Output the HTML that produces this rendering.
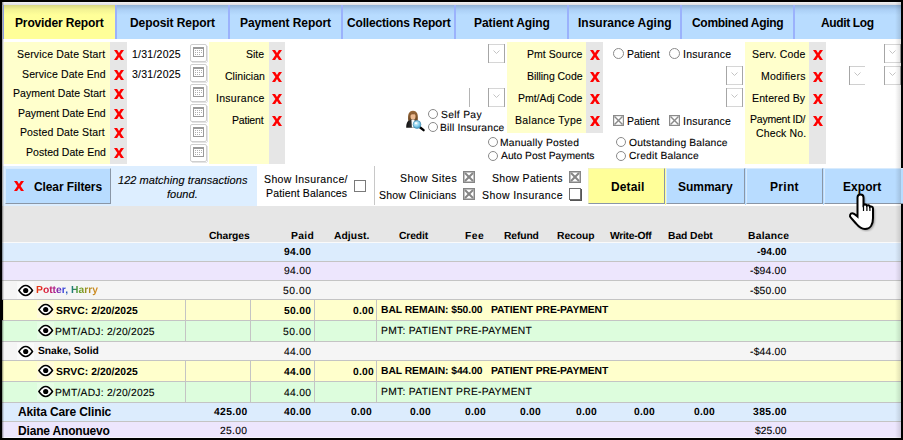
<!DOCTYPE html>
<html><head><meta charset="utf-8">
<style>
*{box-sizing:border-box}
html,body{margin:0;padding:0;width:903px;height:440px;overflow:hidden;background:#000}
body{font-family:"Liberation Sans",sans-serif;color:#000;position:relative}
.a{position:absolute;white-space:nowrap}
svg{display:block}
.r{-webkit-text-stroke:0.1px currentColor}
</style></head><body>
<div class="a" style="left:2px;top:2px;width:899px;height:436px;background:#fff"></div>
<div class="a" style="left:2px;top:2px;width:899px;height:3px;background:linear-gradient(#f2f2f2,#dcdce2)"></div>
<div class="a" style="left:3px;top:5px;width:112px;height:34px;background:linear-gradient(#d6d682 0px,#f4f494 5px,#ffff99 10px);border-left:1px solid #9bb2fc"></div>
<div class="a" style="left:115px;top:5px;width:113px;height:34px;background:linear-gradient(#90b2d6 0px,#acd0f6 5px,#b8dcff 10px);border-left:2px solid #9bb2fc"></div>
<div class="a" style="left:228px;top:5px;width:113px;height:34px;background:linear-gradient(#90b2d6 0px,#acd0f6 5px,#b8dcff 10px);border-left:2px solid #9bb2fc"></div>
<div class="a" style="left:341px;top:5px;width:113px;height:34px;background:linear-gradient(#90b2d6 0px,#acd0f6 5px,#b8dcff 10px);border-left:2px solid #9bb2fc"></div>
<div class="a" style="left:454px;top:5px;width:113px;height:34px;background:linear-gradient(#90b2d6 0px,#acd0f6 5px,#b8dcff 10px);border-left:2px solid #9bb2fc"></div>
<div class="a" style="left:567px;top:5px;width:113px;height:34px;background:linear-gradient(#90b2d6 0px,#acd0f6 5px,#b8dcff 10px);border-left:2px solid #9bb2fc"></div>
<div class="a" style="left:680px;top:5px;width:113px;height:34px;background:linear-gradient(#90b2d6 0px,#acd0f6 5px,#b8dcff 10px);border-left:2px solid #9bb2fc"></div>
<div class="a" style="left:793px;top:5px;width:108px;height:34px;background:linear-gradient(#90b2d6 0px,#acd0f6 5px,#b8dcff 10px);border-left:2px solid #9bb2fc"></div>
<div class="a" style="left:4px;top:42px;width:106px;height:122px;background:#ffffcc"></div>
<div class="a" style="left:110px;top:42px;width:17px;height:122px;background:#e6e6e6"></div>
<div class="a" style="left:114px;top:50px;width:10px;height:10px"><svg width="10" height="10"><polygon points="0,0 3.1,0 5,3 6.9,0 10,0 6.6,5 10,10 6.9,10 5,7 3.1,10 0,10 3.4,5" fill="#f00"/></svg></div>
<div class="a" style="left:114px;top:70px;width:10px;height:10px"><svg width="10" height="10"><polygon points="0,0 3.1,0 5,3 6.9,0 10,0 6.6,5 10,10 6.9,10 5,7 3.1,10 0,10 3.4,5" fill="#f00"/></svg></div>
<div class="a" style="left:114px;top:89px;width:10px;height:10px"><svg width="10" height="10"><polygon points="0,0 3.1,0 5,3 6.9,0 10,0 6.6,5 10,10 6.9,10 5,7 3.1,10 0,10 3.4,5" fill="#f00"/></svg></div>
<div class="a" style="left:114px;top:109px;width:10px;height:10px"><svg width="10" height="10"><polygon points="0,0 3.1,0 5,3 6.9,0 10,0 6.6,5 10,10 6.9,10 5,7 3.1,10 0,10 3.4,5" fill="#f00"/></svg></div>
<div class="a" style="left:114px;top:128px;width:10px;height:10px"><svg width="10" height="10"><polygon points="0,0 3.1,0 5,3 6.9,0 10,0 6.6,5 10,10 6.9,10 5,7 3.1,10 0,10 3.4,5" fill="#f00"/></svg></div>
<div class="a" style="left:114px;top:148px;width:10px;height:10px"><svg width="10" height="10"><polygon points="0,0 3.1,0 5,3 6.9,0 10,0 6.6,5 10,10 6.9,10 5,7 3.1,10 0,10 3.4,5" fill="#f00"/></svg></div>
<div class="a" style="left:190px;top:44px;width:18px;height:19px"><svg width="18" height="19"><rect x="0.5" y="0.5" width="16" height="17" rx="1.5" fill="#fff" stroke="#cfcfcf"/><line x1="17.5" y1="2" x2="17.5" y2="18" stroke="#e4e4e4"/><line x1="2" y1="18.5" x2="17" y2="18.5" stroke="#e4e4e4"/><rect x="3.5" y="3.5" width="10" height="9" fill="#fff" stroke="#9a9a9a"/><rect x="3" y="3" width="11" height="2" fill="#9a9a9a"/><g fill="#b0b0b0"><rect x="5" y="6" width="1" height="1"/><rect x="7" y="6" width="1" height="1"/><rect x="9" y="6" width="1" height="1"/><rect x="11" y="6" width="1" height="1"/><rect x="5" y="8" width="1" height="1"/><rect x="7" y="8" width="1" height="1"/><rect x="9" y="8" width="1" height="1"/><rect x="11" y="8" width="1" height="1"/><rect x="5" y="10" width="1" height="1"/><rect x="7" y="10" width="1" height="1"/><rect x="9" y="10" width="1" height="1"/></g></svg></div>
<div class="a" style="left:190px;top:64px;width:18px;height:19px"><svg width="18" height="19"><rect x="0.5" y="0.5" width="16" height="17" rx="1.5" fill="#fff" stroke="#cfcfcf"/><line x1="17.5" y1="2" x2="17.5" y2="18" stroke="#e4e4e4"/><line x1="2" y1="18.5" x2="17" y2="18.5" stroke="#e4e4e4"/><rect x="3.5" y="3.5" width="10" height="9" fill="#fff" stroke="#9a9a9a"/><rect x="3" y="3" width="11" height="2" fill="#9a9a9a"/><g fill="#b0b0b0"><rect x="5" y="6" width="1" height="1"/><rect x="7" y="6" width="1" height="1"/><rect x="9" y="6" width="1" height="1"/><rect x="11" y="6" width="1" height="1"/><rect x="5" y="8" width="1" height="1"/><rect x="7" y="8" width="1" height="1"/><rect x="9" y="8" width="1" height="1"/><rect x="11" y="8" width="1" height="1"/><rect x="5" y="10" width="1" height="1"/><rect x="7" y="10" width="1" height="1"/><rect x="9" y="10" width="1" height="1"/></g></svg></div>
<div class="a" style="left:190px;top:84px;width:18px;height:19px"><svg width="18" height="19"><rect x="0.5" y="0.5" width="16" height="17" rx="1.5" fill="#fff" stroke="#cfcfcf"/><line x1="17.5" y1="2" x2="17.5" y2="18" stroke="#e4e4e4"/><line x1="2" y1="18.5" x2="17" y2="18.5" stroke="#e4e4e4"/><rect x="3.5" y="3.5" width="10" height="9" fill="#fff" stroke="#9a9a9a"/><rect x="3" y="3" width="11" height="2" fill="#9a9a9a"/><g fill="#b0b0b0"><rect x="5" y="6" width="1" height="1"/><rect x="7" y="6" width="1" height="1"/><rect x="9" y="6" width="1" height="1"/><rect x="11" y="6" width="1" height="1"/><rect x="5" y="8" width="1" height="1"/><rect x="7" y="8" width="1" height="1"/><rect x="9" y="8" width="1" height="1"/><rect x="11" y="8" width="1" height="1"/><rect x="5" y="10" width="1" height="1"/><rect x="7" y="10" width="1" height="1"/><rect x="9" y="10" width="1" height="1"/></g></svg></div>
<div class="a" style="left:190px;top:104px;width:18px;height:19px"><svg width="18" height="19"><rect x="0.5" y="0.5" width="16" height="17" rx="1.5" fill="#fff" stroke="#cfcfcf"/><line x1="17.5" y1="2" x2="17.5" y2="18" stroke="#e4e4e4"/><line x1="2" y1="18.5" x2="17" y2="18.5" stroke="#e4e4e4"/><rect x="3.5" y="3.5" width="10" height="9" fill="#fff" stroke="#9a9a9a"/><rect x="3" y="3" width="11" height="2" fill="#9a9a9a"/><g fill="#b0b0b0"><rect x="5" y="6" width="1" height="1"/><rect x="7" y="6" width="1" height="1"/><rect x="9" y="6" width="1" height="1"/><rect x="11" y="6" width="1" height="1"/><rect x="5" y="8" width="1" height="1"/><rect x="7" y="8" width="1" height="1"/><rect x="9" y="8" width="1" height="1"/><rect x="11" y="8" width="1" height="1"/><rect x="5" y="10" width="1" height="1"/><rect x="7" y="10" width="1" height="1"/><rect x="9" y="10" width="1" height="1"/></g></svg></div>
<div class="a" style="left:190px;top:124px;width:18px;height:19px"><svg width="18" height="19"><rect x="0.5" y="0.5" width="16" height="17" rx="1.5" fill="#fff" stroke="#cfcfcf"/><line x1="17.5" y1="2" x2="17.5" y2="18" stroke="#e4e4e4"/><line x1="2" y1="18.5" x2="17" y2="18.5" stroke="#e4e4e4"/><rect x="3.5" y="3.5" width="10" height="9" fill="#fff" stroke="#9a9a9a"/><rect x="3" y="3" width="11" height="2" fill="#9a9a9a"/><g fill="#b0b0b0"><rect x="5" y="6" width="1" height="1"/><rect x="7" y="6" width="1" height="1"/><rect x="9" y="6" width="1" height="1"/><rect x="11" y="6" width="1" height="1"/><rect x="5" y="8" width="1" height="1"/><rect x="7" y="8" width="1" height="1"/><rect x="9" y="8" width="1" height="1"/><rect x="11" y="8" width="1" height="1"/><rect x="5" y="10" width="1" height="1"/><rect x="7" y="10" width="1" height="1"/><rect x="9" y="10" width="1" height="1"/></g></svg></div>
<div class="a" style="left:190px;top:144px;width:18px;height:19px"><svg width="18" height="19"><rect x="0.5" y="0.5" width="16" height="17" rx="1.5" fill="#fff" stroke="#cfcfcf"/><line x1="17.5" y1="2" x2="17.5" y2="18" stroke="#e4e4e4"/><line x1="2" y1="18.5" x2="17" y2="18.5" stroke="#e4e4e4"/><rect x="3.5" y="3.5" width="10" height="9" fill="#fff" stroke="#9a9a9a"/><rect x="3" y="3" width="11" height="2" fill="#9a9a9a"/><g fill="#b0b0b0"><rect x="5" y="6" width="1" height="1"/><rect x="7" y="6" width="1" height="1"/><rect x="9" y="6" width="1" height="1"/><rect x="11" y="6" width="1" height="1"/><rect x="5" y="8" width="1" height="1"/><rect x="7" y="8" width="1" height="1"/><rect x="9" y="8" width="1" height="1"/><rect x="11" y="8" width="1" height="1"/><rect x="5" y="10" width="1" height="1"/><rect x="7" y="10" width="1" height="1"/><rect x="9" y="10" width="1" height="1"/></g></svg></div>
<div class="a" style="left:209px;top:42px;width:60px;height:122px;background:#ffffcc"></div>
<div class="a" style="left:269px;top:42px;width:16px;height:122px;background:#e6e6e6"></div>
<div class="a" style="left:272px;top:50px;width:10px;height:10px"><svg width="10" height="10"><polygon points="0,0 3.1,0 5,3 6.9,0 10,0 6.6,5 10,10 6.9,10 5,7 3.1,10 0,10 3.4,5" fill="#f00"/></svg></div>
<div class="a" style="left:272px;top:72px;width:10px;height:10px"><svg width="10" height="10"><polygon points="0,0 3.1,0 5,3 6.9,0 10,0 6.6,5 10,10 6.9,10 5,7 3.1,10 0,10 3.4,5" fill="#f00"/></svg></div>
<div class="a" style="left:272px;top:94px;width:10px;height:10px"><svg width="10" height="10"><polygon points="0,0 3.1,0 5,3 6.9,0 10,0 6.6,5 10,10 6.9,10 5,7 3.1,10 0,10 3.4,5" fill="#f00"/></svg></div>
<div class="a" style="left:272px;top:116px;width:10px;height:10px"><svg width="10" height="10"><polygon points="0,0 3.1,0 5,3 6.9,0 10,0 6.6,5 10,10 6.9,10 5,7 3.1,10 0,10 3.4,5" fill="#f00"/></svg></div>
<div class="a" style="left:507px;top:42px;width:79px;height:91px;background:#ffffcc"></div>
<div class="a" style="left:586px;top:42px;width:17px;height:91px;background:#e6e6e6"></div>
<div class="a" style="left:590px;top:50px;width:10px;height:10px"><svg width="10" height="10"><polygon points="0,0 3.1,0 5,3 6.9,0 10,0 6.6,5 10,10 6.9,10 5,7 3.1,10 0,10 3.4,5" fill="#f00"/></svg></div>
<div class="a" style="left:590px;top:72px;width:10px;height:10px"><svg width="10" height="10"><polygon points="0,0 3.1,0 5,3 6.9,0 10,0 6.6,5 10,10 6.9,10 5,7 3.1,10 0,10 3.4,5" fill="#f00"/></svg></div>
<div class="a" style="left:590px;top:94px;width:10px;height:10px"><svg width="10" height="10"><polygon points="0,0 3.1,0 5,3 6.9,0 10,0 6.6,5 10,10 6.9,10 5,7 3.1,10 0,10 3.4,5" fill="#f00"/></svg></div>
<div class="a" style="left:590px;top:116px;width:10px;height:10px"><svg width="10" height="10"><polygon points="0,0 3.1,0 5,3 6.9,0 10,0 6.6,5 10,10 6.9,10 5,7 3.1,10 0,10 3.4,5" fill="#f00"/></svg></div>
<div class="a" style="left:745px;top:42px;width:64px;height:122px;background:#ffffcc"></div>
<div class="a" style="left:809px;top:42px;width:17px;height:122px;background:#e6e6e6"></div>
<div class="a" style="left:813px;top:50px;width:10px;height:10px"><svg width="10" height="10"><polygon points="0,0 3.1,0 5,3 6.9,0 10,0 6.6,5 10,10 6.9,10 5,7 3.1,10 0,10 3.4,5" fill="#f00"/></svg></div>
<div class="a" style="left:813px;top:72px;width:10px;height:10px"><svg width="10" height="10"><polygon points="0,0 3.1,0 5,3 6.9,0 10,0 6.6,5 10,10 6.9,10 5,7 3.1,10 0,10 3.4,5" fill="#f00"/></svg></div>
<div class="a" style="left:813px;top:94px;width:10px;height:10px"><svg width="10" height="10"><polygon points="0,0 3.1,0 5,3 6.9,0 10,0 6.6,5 10,10 6.9,10 5,7 3.1,10 0,10 3.4,5" fill="#f00"/></svg></div>
<div class="a" style="left:813px;top:116px;width:10px;height:10px"><svg width="10" height="10"><polygon points="0,0 3.1,0 5,3 6.9,0 10,0 6.6,5 10,10 6.9,10 5,7 3.1,10 0,10 3.4,5" fill="#f00"/></svg></div>
<div class="a" style="left:488px;top:44px;width:17px;height:19px"><svg width="17" height="19"><rect x="0" y="0" width="17" height="19" fill="#fff"/><line x1="0" y1="0.5" x2="17" y2="0.5" stroke="#d6d6d6"/><line x1="0" y1="18.5" x2="17" y2="18.5" stroke="#d6d6d6"/><line x1="0.5" y1="0" x2="0.5" y2="19" stroke="#a6a6a6"/><line x1="16.5" y1="0" x2="16.5" y2="19" stroke="#a6a6a6"/><polyline points="5.5,6.5 8.5,9.5 11.5,6.5" fill="none" stroke="#c4c4c4" stroke-width="1"/></svg></div>
<div class="a" style="left:488px;top:88px;width:17px;height:19px"><svg width="17" height="19"><rect x="0" y="0" width="17" height="19" fill="#fff"/><line x1="0" y1="0.5" x2="17" y2="0.5" stroke="#d6d6d6"/><line x1="0" y1="18.5" x2="17" y2="18.5" stroke="#d6d6d6"/><line x1="0.5" y1="0" x2="0.5" y2="19" stroke="#a6a6a6"/><line x1="16.5" y1="0" x2="16.5" y2="19" stroke="#a6a6a6"/><polyline points="5.5,6.5 8.5,9.5 11.5,6.5" fill="none" stroke="#c4c4c4" stroke-width="1"/></svg></div>
<div class="a" style="left:726px;top:66px;width:17px;height:19px"><svg width="17" height="19"><rect x="0" y="0" width="17" height="19" fill="#fff"/><line x1="0" y1="0.5" x2="17" y2="0.5" stroke="#d6d6d6"/><line x1="0" y1="18.5" x2="17" y2="18.5" stroke="#d6d6d6"/><line x1="0.5" y1="0" x2="0.5" y2="19" stroke="#a6a6a6"/><line x1="16.5" y1="0" x2="16.5" y2="19" stroke="#a6a6a6"/><polyline points="5.5,6.5 8.5,9.5 11.5,6.5" fill="none" stroke="#c4c4c4" stroke-width="1"/></svg></div>
<div class="a" style="left:726px;top:88px;width:17px;height:19px"><svg width="17" height="19"><rect x="0" y="0" width="17" height="19" fill="#fff"/><line x1="0" y1="0.5" x2="17" y2="0.5" stroke="#d6d6d6"/><line x1="0" y1="18.5" x2="17" y2="18.5" stroke="#d6d6d6"/><line x1="0.5" y1="0" x2="0.5" y2="19" stroke="#a6a6a6"/><line x1="16.5" y1="0" x2="16.5" y2="19" stroke="#a6a6a6"/><polyline points="5.5,6.5 8.5,9.5 11.5,6.5" fill="none" stroke="#c4c4c4" stroke-width="1"/></svg></div>
<div class="a" style="left:884px;top:44px;width:17px;height:19px"><svg width="17" height="19"><rect x="0" y="0" width="17" height="19" fill="#fff"/><line x1="0" y1="0.5" x2="17" y2="0.5" stroke="#d6d6d6"/><line x1="0" y1="18.5" x2="17" y2="18.5" stroke="#d6d6d6"/><line x1="0.5" y1="0" x2="0.5" y2="19" stroke="#a6a6a6"/><line x1="16.5" y1="0" x2="16.5" y2="19" stroke="#a6a6a6"/><polyline points="5.5,6.5 8.5,9.5 11.5,6.5" fill="none" stroke="#c4c4c4" stroke-width="1"/></svg></div>
<div class="a" style="left:884px;top:66px;width:17px;height:19px"><svg width="17" height="19"><rect x="0" y="0" width="17" height="19" fill="#fff"/><line x1="0" y1="0.5" x2="17" y2="0.5" stroke="#d6d6d6"/><line x1="0" y1="18.5" x2="17" y2="18.5" stroke="#d6d6d6"/><line x1="0.5" y1="0" x2="0.5" y2="19" stroke="#a6a6a6"/><line x1="16.5" y1="0" x2="16.5" y2="19" stroke="#a6a6a6"/><polyline points="5.5,6.5 8.5,9.5 11.5,6.5" fill="none" stroke="#c4c4c4" stroke-width="1"/></svg></div>
<div class="a" style="left:849px;top:66px;width:16px;height:19px"><svg width="16" height="19"><line x1="0" y1="0.5" x2="16" y2="0.5" stroke="#d0d0d0"/><line x1="0" y1="18.5" x2="16" y2="18.5" stroke="#d0d0d0"/><line x1="0.5" y1="0" x2="0.5" y2="19" stroke="#a6a6a6"/><polyline points="5.5,6.5 8.5,9.5 11.5,6.5" fill="none" stroke="#c4c4c4" stroke-width="1"/></svg></div>
<div class="a" style="left:469px;top:88px;width:1px;height:19px;background:#b4b4b4"></div>
<div class="a" style="left:402px;top:106px;width:26px;height:26px"><svg width="26" height="26" viewBox="0 0 26 26"><defs><linearGradient id="hg" x1="0" y1="0" x2="0" y2="1"><stop offset="0" stop-color="#9a6a3a"/><stop offset="1" stop-color="#6a4420"/></linearGradient><linearGradient id="jg" x1="0" y1="0" x2="1" y2="0"><stop offset="0" stop-color="#111"/><stop offset="1" stop-color="#555"/></linearGradient><radialGradient id="mg" cx="0.4" cy="0.35" r="0.7"><stop offset="0" stop-color="#e8f8ff"/><stop offset="0.5" stop-color="#8fd4f0"/><stop offset="1" stop-color="#3a98c8"/></radialGradient></defs><path d="M6.3 15 C5.6 9 6.6 4.8 11 4.8 C15.4 4.8 16.4 9 15.7 15 L14 14.2 L8 14.2 Z" fill="url(#hg)"/><ellipse cx="11" cy="10.6" rx="2.5" ry="3.3" fill="#ecba90"/><path d="M8.2 8.8 C8.8 6.8 13.2 6.8 13.8 8.8 C13 8 9 8 8.2 8.8Z" fill="#7a4a20"/><path d="M4.2 21.8 C4.2 16.5 5.8 14.2 9 13.8 L13 13.8 C15.2 14.2 16.2 15.5 16.2 17.5 L16.2 21.8 Z" fill="url(#jg)"/><path d="M9.4 13.8 L12.6 13.8 L12.2 21.5 L9.9 21.5 Z" fill="#fff"/><line x1="17.6" y1="21" x2="21.6" y2="24.2" stroke="#000" stroke-width="2.3" stroke-linecap="round"/><circle cx="15" cy="18.5" r="3.9" fill="url(#mg)" stroke="#4a8fb2" stroke-width="0.7"/><ellipse cx="14" cy="17.2" rx="1.2" ry="0.9" fill="#fff" opacity="0.9"/></svg></div>
<div class="a" style="left:428px;top:109px;width:10px;height:10px;border:1px solid #8a8a8a;border-radius:50%;background:#fff"></div>
<div class="a" style="left:428px;top:122px;width:10px;height:10px;border:1px solid #8a8a8a;border-radius:50%;background:#fff"></div>
<div class="a" style="left:488px;top:137px;width:10px;height:10px;border:1px solid #8a8a8a;border-radius:50%;background:#fff"></div>
<div class="a" style="left:488px;top:151px;width:10px;height:10px;border:1px solid #8a8a8a;border-radius:50%;background:#fff"></div>
<div class="a" style="left:613px;top:48px;width:11px;height:11px;border:1px solid #8a8a8a;border-radius:50%;background:#fff"></div>
<div class="a" style="left:669px;top:48px;width:11px;height:11px;border:1px solid #8a8a8a;border-radius:50%;background:#fff"></div>
<div class="a" style="left:613px;top:115px;width:11px;height:11px"><svg width="11" height="11"><rect x="0.6" y="0.6" width="9.8" height="9.8" fill="#fff" stroke="#8a8a8a" stroke-width="1.2"/><line x1="1.5" y1="1.5" x2="9.5" y2="9.5" stroke="#8a8a8a" stroke-width="1.5"/><line x1="9.5" y1="1.5" x2="1.5" y2="9.5" stroke="#8a8a8a" stroke-width="1.5"/></svg></div>
<div class="a" style="left:669px;top:115px;width:11px;height:11px"><svg width="11" height="11"><rect x="0.6" y="0.6" width="9.8" height="9.8" fill="#fff" stroke="#8a8a8a" stroke-width="1.2"/><line x1="1.5" y1="1.5" x2="9.5" y2="9.5" stroke="#8a8a8a" stroke-width="1.5"/><line x1="9.5" y1="1.5" x2="1.5" y2="9.5" stroke="#8a8a8a" stroke-width="1.5"/></svg></div>
<div class="a" style="left:616px;top:137px;width:10px;height:10px;border:1px solid #8a8a8a;border-radius:50%;background:#fff"></div>
<div class="a" style="left:616px;top:151px;width:10px;height:10px;border:1px solid #8a8a8a;border-radius:50%;background:#fff"></div>
<div class="a" style="left:3px;top:166px;width:254px;height:40px;background:#ddeeff"></div>
<div class="a" style="left:5px;top:168px;width:106px;height:36px;background:#b8dcff;border:1px solid;border-color:#d8ebfd #8a96a6 #8a96a6 #d8ebfd"></div>
<div class="a" style="left:14px;top:181px;width:10px;height:10px"><svg width="10" height="10"><polygon points="0,0 3.1,0 5,3 6.9,0 10,0 6.6,5 10,10 6.9,10 5,7 3.1,10 0,10 3.4,5" fill="#f00"/></svg></div>
<div class="a" style="left:354px;top:180px;width:12px;height:12px;border:1px solid #7a7a7a;background:#fff"></div>
<div class="a" style="left:374px;top:166px;width:1px;height:39px;background:#c8c8c8"></div>
<div class="a" style="left:463px;top:171px;width:12px;height:12px"><svg width="12" height="12"><rect x="0.75" y="0.75" width="10.5" height="10.5" fill="#fff" stroke="#858585" stroke-width="1.5"/><line x1="2" y1="2" x2="10" y2="10" stroke="#858585" stroke-width="1.9"/><line x1="10" y1="2" x2="2" y2="10" stroke="#858585" stroke-width="1.9"/></svg></div>
<div class="a" style="left:463px;top:188px;width:12px;height:12px"><svg width="12" height="12"><rect x="0.75" y="0.75" width="10.5" height="10.5" fill="#fff" stroke="#858585" stroke-width="1.5"/><line x1="2" y1="2" x2="10" y2="10" stroke="#858585" stroke-width="1.9"/><line x1="10" y1="2" x2="2" y2="10" stroke="#858585" stroke-width="1.9"/></svg></div>
<div class="a" style="left:569px;top:171px;width:12px;height:12px"><svg width="12" height="12"><rect x="0.75" y="0.75" width="10.5" height="10.5" fill="#fff" stroke="#858585" stroke-width="1.5"/><line x1="2" y1="2" x2="10" y2="10" stroke="#858585" stroke-width="1.9"/><line x1="10" y1="2" x2="2" y2="10" stroke="#858585" stroke-width="1.9"/></svg></div>
<div class="a" style="left:569px;top:188px;width:13px;height:13px"><svg width="13" height="13"><rect x="1" y="1" width="12" height="12" fill="#555"/><rect x="0.5" y="0.5" width="11" height="11" fill="#fff" stroke="#6e6e6e"/></svg></div>
<div class="a" style="left:588px;top:168px;width:77px;height:36px;background:#ffff99;border:1px solid;border-color:#f4f4c0 #8a96a6 #8a96a6 #f4f4c0"></div>
<div class="a" style="left:665px;top:168px;width:1px;height:37px;background:#ffff99"></div>
<div class="a" style="left:666px;top:168px;width:79px;height:36px;background:#b8dcff;border:1px solid;border-color:#d8ebfd #8a96a6 #8a96a6 #d8ebfd"></div>
<div class="a" style="left:745px;top:168px;width:1px;height:37px;background:#b8dcff"></div>
<div class="a" style="left:746px;top:168px;width:77px;height:36px;background:#b8dcff;border:1px solid;border-color:#d8ebfd #8a96a6 #8a96a6 #d8ebfd"></div>
<div class="a" style="left:823px;top:168px;width:1px;height:37px;background:#b8dcff"></div>
<div class="a" style="left:824px;top:168px;width:80px;height:36px;background:#b8dcff;border:1px solid;border-color:#d8ebfd #8a96a6 #8a96a6 #d8ebfd"></div>
<div class="a" style="left:904px;top:168px;width:1px;height:37px;background:#b8dcff"></div>
<div class="a" style="left:2px;top:206px;width:899px;height:36px;background:#e6e6e6"></div>
<div class="a" style="left:2px;top:242px;width:899px;height:1px;background:#fafafa"></div>
<div class="a" style="left:2px;top:243px;width:899px;height:18px;background:#dcecfd"></div>
<div class="a" style="left:2px;top:261px;width:899px;height:1px;background:#c4c4c4"></div>
<div class="a" style="left:2px;top:262px;width:899px;height:18px;background:#ede6fd"></div>
<div class="a" style="left:2px;top:280px;width:899px;height:1px;background:#c4c4c4"></div>
<div class="a" style="left:2px;top:281px;width:899px;height:18px;background:#f5f5f5"></div>
<div class="a" style="left:2px;top:299px;width:899px;height:1px;background:#c4c4c4"></div>
<div class="a" style="left:2px;top:300px;width:899px;height:20px;background:#ffffcc"></div>
<div class="a" style="left:2px;top:320px;width:899px;height:1px;background:#c4c4c4"></div>
<div class="a" style="left:2px;top:321px;width:899px;height:20px;background:#ddfddd"></div>
<div class="a" style="left:2px;top:341px;width:899px;height:1px;background:#c4c4c4"></div>
<div class="a" style="left:2px;top:342px;width:899px;height:18px;background:#f5f5f5"></div>
<div class="a" style="left:2px;top:360px;width:899px;height:1px;background:#c4c4c4"></div>
<div class="a" style="left:2px;top:361px;width:899px;height:20px;background:#ffffcc"></div>
<div class="a" style="left:2px;top:381px;width:899px;height:1px;background:#c4c4c4"></div>
<div class="a" style="left:2px;top:382px;width:899px;height:20px;background:#ddfddd"></div>
<div class="a" style="left:2px;top:402px;width:899px;height:1px;background:#c4c4c4"></div>
<div class="a" style="left:2px;top:403px;width:899px;height:18px;background:#dcecfd"></div>
<div class="a" style="left:2px;top:421px;width:899px;height:1px;background:#c4c4c4"></div>
<div class="a" style="left:2px;top:422px;width:899px;height:15px;background:#ede6fd"></div>
<div class="a" style="left:2px;top:437px;width:899px;height:1px;background:#f6f2fc"></div>
<div class="a" style="left:2px;top:300px;width:1px;height:20px;background:#000"></div>
<div class="a" style="left:185px;top:300px;width:1px;height:20px;background:#c4c4c4"></div>
<div class="a" style="left:250px;top:300px;width:1px;height:20px;background:#c4c4c4"></div>
<div class="a" style="left:314px;top:300px;width:1px;height:20px;background:#c4c4c4"></div>
<div class="a" style="left:376px;top:300px;width:1px;height:20px;background:#c4c4c4"></div>
<div class="a" style="left:185px;top:321px;width:1px;height:20px;background:#c4c4c4"></div>
<div class="a" style="left:250px;top:321px;width:1px;height:20px;background:#c4c4c4"></div>
<div class="a" style="left:314px;top:321px;width:1px;height:20px;background:#c4c4c4"></div>
<div class="a" style="left:376px;top:321px;width:1px;height:20px;background:#c4c4c4"></div>
<div class="a" style="left:185px;top:361px;width:1px;height:20px;background:#c4c4c4"></div>
<div class="a" style="left:250px;top:361px;width:1px;height:20px;background:#c4c4c4"></div>
<div class="a" style="left:314px;top:361px;width:1px;height:20px;background:#c4c4c4"></div>
<div class="a" style="left:376px;top:361px;width:1px;height:20px;background:#c4c4c4"></div>
<div class="a" style="left:185px;top:382px;width:1px;height:20px;background:#c4c4c4"></div>
<div class="a" style="left:250px;top:382px;width:1px;height:20px;background:#c4c4c4"></div>
<div class="a" style="left:314px;top:382px;width:1px;height:20px;background:#c4c4c4"></div>
<div class="a" style="left:376px;top:382px;width:1px;height:20px;background:#c4c4c4"></div>
<div class="a" style="left:17px;top:282px;width:17px;height:17px;background:#fafafa"></div>
<div class="a" style="left:18px;top:284px;width:16px;height:13px"><svg width="16" height="13" viewBox="0 0 16 13"><path d="M0.9 6.5 Q7.7 -3.4 14.5 6.5 Q7.7 16.4 0.9 6.5 Z" fill="#fff" stroke="#000" stroke-width="1.6" stroke-linejoin="round"/><circle cx="7.7" cy="6.5" r="2.6" fill="#000"/></svg></div>
<div class="a" style="left:37px;top:301px;width:17px;height:17px;background:#fffbdc"></div>
<div class="a" style="left:38px;top:303px;width:16px;height:13px"><svg width="16" height="13" viewBox="0 0 16 13"><path d="M0.9 6.5 Q7.7 -3.4 14.5 6.5 Q7.7 16.4 0.9 6.5 Z" fill="#fff" stroke="#000" stroke-width="1.6" stroke-linejoin="round"/><circle cx="7.7" cy="6.5" r="2.6" fill="#000"/></svg></div>
<div class="a" style="left:37px;top:322px;width:17px;height:17px;background:#e6fde6"></div>
<div class="a" style="left:38px;top:324px;width:16px;height:13px"><svg width="16" height="13" viewBox="0 0 16 13"><path d="M0.9 6.5 Q7.7 -3.4 14.5 6.5 Q7.7 16.4 0.9 6.5 Z" fill="#fff" stroke="#000" stroke-width="1.6" stroke-linejoin="round"/><circle cx="7.7" cy="6.5" r="2.6" fill="#000"/></svg></div>
<div class="a" style="left:37px;top:362px;width:17px;height:17px;background:#fffbdc"></div>
<div class="a" style="left:38px;top:364px;width:16px;height:13px"><svg width="16" height="13" viewBox="0 0 16 13"><path d="M0.9 6.5 Q7.7 -3.4 14.5 6.5 Q7.7 16.4 0.9 6.5 Z" fill="#fff" stroke="#000" stroke-width="1.6" stroke-linejoin="round"/><circle cx="7.7" cy="6.5" r="2.6" fill="#000"/></svg></div>
<div class="a" style="left:37px;top:383px;width:17px;height:17px;background:#e6fde6"></div>
<div class="a" style="left:38px;top:385px;width:16px;height:13px"><svg width="16" height="13" viewBox="0 0 16 13"><path d="M0.9 6.5 Q7.7 -3.4 14.5 6.5 Q7.7 16.4 0.9 6.5 Z" fill="#fff" stroke="#000" stroke-width="1.6" stroke-linejoin="round"/><circle cx="7.7" cy="6.5" r="2.6" fill="#000"/></svg></div>
<div class="a" style="left:17px;top:343px;width:17px;height:17px;background:#fafafa"></div>
<div class="a" style="left:18px;top:345px;width:16px;height:13px"><svg width="16" height="13" viewBox="0 0 16 13"><path d="M0.9 6.5 Q7.7 -3.4 14.5 6.5 Q7.7 16.4 0.9 6.5 Z" fill="#fff" stroke="#000" stroke-width="1.6" stroke-linejoin="round"/><circle cx="7.7" cy="6.5" r="2.6" fill="#000"/></svg></div>
<div class="a" style="left:15px;top:13px;font-size:12px;line-height:20px;font-weight:bold;letter-spacing:-0.143px;">Provider Report</div>
<div class="a" style="left:130px;top:13px;font-size:12px;line-height:20px;font-weight:bold;letter-spacing:-0.077px;">Deposit Report</div>
<div class="a" style="left:240px;top:13px;font-size:12px;line-height:20px;font-weight:bold;letter-spacing:-0.077px;">Payment Report</div>
<div class="a" style="left:347px;top:13px;font-size:12px;line-height:20px;font-weight:bold;letter-spacing:-0.176px;">Collections Report</div>
<div class="a" style="left:474px;top:13px;font-size:12px;line-height:20px;font-weight:bold;letter-spacing:-0.083px;">Patient Aging</div>
<div class="a" style="left:578px;top:13px;font-size:12px;line-height:20px;font-weight:bold;">Insurance Aging</div>
<div class="a" style="left:692px;top:13px;font-size:12px;line-height:20px;font-weight:bold;letter-spacing:-0.308px;">Combined Aging</div>
<div class="a" style="left:821px;top:13px;font-size:12px;line-height:20px;font-weight:bold;letter-spacing:-0.375px;">Audit Log</div>
<div class="a r" style="left:17px;top:44px;font-size:10.5px;line-height:20px;letter-spacing:0.171px;">Service Date Start</div>
<div class="a r" style="left:22px;top:64px;font-size:10.5px;line-height:20px;letter-spacing:0.127px;">Service Date End</div>
<div class="a r" style="left:13px;top:83px;font-size:10.5px;line-height:20px;letter-spacing:0.053px;">Payment Date Start</div>
<div class="a r" style="left:18px;top:103px;font-size:10.5px;line-height:20px;letter-spacing:-0.040px;">Payment Date End</div>
<div class="a r" style="left:20px;top:122px;font-size:10.5px;line-height:20px;letter-spacing:0.112px;">Posted Date Start</div>
<div class="a r" style="left:26px;top:142px;font-size:10.5px;line-height:20px;letter-spacing:0.036px;">Posted Date End</div>
<div class="a r" style="left:132px;top:44px;font-size:10.5px;line-height:20px;letter-spacing:0.250px;">1/31/2025</div>
<div class="a r" style="left:132px;top:64px;font-size:10.5px;line-height:20px;letter-spacing:0.250px;">3/31/2025</div>
<div class="a r" style="left:246px;top:44px;font-size:10.5px;line-height:20px;">Site</div>
<div class="a r" style="left:225px;top:66px;font-size:10.5px;line-height:20px;letter-spacing:0.025px;">Clinician</div>
<div class="a r" style="left:216px;top:88px;font-size:10.5px;line-height:20px;letter-spacing:0.287px;">Insurance</div>
<div class="a r" style="left:232px;top:110px;font-size:10.5px;line-height:20px;letter-spacing:-0.183px;">Patient</div>
<div class="a r" style="left:527px;top:44px;font-size:10.5px;line-height:20px;letter-spacing:0.056px;">Pmt Source</div>
<div class="a r" style="left:527px;top:66px;font-size:10.5px;line-height:20px;letter-spacing:-0.045px;">Billing Code</div>
<div class="a r" style="left:518px;top:88px;font-size:10.5px;line-height:20px;letter-spacing:-0.036px;">Pmt/Adj Code</div>
<div class="a r" style="left:515px;top:110px;font-size:10.5px;line-height:20px;letter-spacing:0.318px;">Balance Type</div>
<div class="a r" style="left:752px;top:44px;font-size:10.5px;line-height:20px;letter-spacing:0.167px;">Serv. Code</div>
<div class="a r" style="left:761px;top:66px;font-size:10.5px;line-height:20px;letter-spacing:0.225px;">Modifiers</div>
<div class="a r" style="left:752px;top:88px;font-size:10.5px;line-height:20px;letter-spacing:0.122px;">Entered By</div>
<div class="a r" style="left:750px;top:109px;font-size:10.5px;line-height:20px;letter-spacing:-0.230px;">Payment ID/</div>
<div class="a r" style="left:756px;top:123px;font-size:10.5px;line-height:20px;letter-spacing:0.150px;">Check No.</div>
<div class="a r" style="left:441px;top:106px;font-size:10.3px;line-height:20px;letter-spacing:0.314px;text-rendering:geometricPrecision;">Self Pay</div>
<div class="a r" style="left:440px;top:119px;font-size:10.3px;line-height:20px;letter-spacing:0.185px;text-rendering:geometricPrecision;">Bill Insurance</div>
<div class="a r" style="left:500px;top:134px;font-size:10.3px;line-height:20px;letter-spacing:0.207px;text-rendering:geometricPrecision;">Manually Posted</div>
<div class="a r" style="left:501px;top:147px;font-size:10.3px;line-height:20px;letter-spacing:0.012px;text-rendering:geometricPrecision;">Auto Post Payments</div>
<div class="a r" style="left:627px;top:44px;font-size:10.5px;line-height:20px;letter-spacing:-0.017px;">Patient</div>
<div class="a r" style="left:683px;top:44px;font-size:10.5px;line-height:20px;letter-spacing:0.250px;">Insurance</div>
<div class="a r" style="left:627px;top:111px;font-size:10.5px;line-height:20px;letter-spacing:-0.050px;">Patient</div>
<div class="a r" style="left:683px;top:111px;font-size:10.5px;line-height:20px;letter-spacing:0.225px;">Insurance</div>
<div class="a r" style="left:629px;top:134px;font-size:10.3px;line-height:20px;letter-spacing:0.161px;text-rendering:geometricPrecision;">Outstanding Balance</div>
<div class="a r" style="left:629px;top:147px;font-size:10.3px;line-height:20px;letter-spacing:0.162px;text-rendering:geometricPrecision;">Credit Balance</div>
<div class="a" style="left:34px;top:177px;font-size:12px;line-height:20px;font-weight:bold;letter-spacing:-0.108px;">Clear Filters</div>
<div class="a r" style="left:118px;top:170px;font-size:11px;line-height:20px;font-style:italic;letter-spacing:0.042px;">122 matching transactions</div>
<div class="a r" style="left:167px;top:184px;font-size:11px;line-height:20px;font-style:italic;letter-spacing:0.020px;">found.</div>
<div class="a r" style="left:264px;top:169px;font-size:10.5px;line-height:20px;letter-spacing:0.379px;">Show Insurance/</div>
<div class="a r" style="left:266px;top:183px;font-size:10.5px;line-height:20px;letter-spacing:0.153px;">Patient Balances</div>
<div class="a r" style="left:400px;top:168px;font-size:10.5px;line-height:20px;letter-spacing:0.456px;">Show Sites</div>
<div class="a r" style="left:379px;top:185px;font-size:10.5px;line-height:20px;letter-spacing:0.229px;">Show Clinicians</div>
<div class="a r" style="left:492px;top:168px;font-size:10.5px;line-height:20px;letter-spacing:0.283px;">Show Patients</div>
<div class="a r" style="left:482px;top:185px;font-size:10.5px;line-height:20px;letter-spacing:0.400px;">Show Insurance</div>
<div class="a" style="left:611px;top:177px;font-size:12px;line-height:20px;font-weight:bold;letter-spacing:0.120px;">Detail</div>
<div class="a" style="left:678px;top:177px;font-size:12px;line-height:20px;font-weight:bold;letter-spacing:-0.017px;">Summary</div>
<div class="a" style="left:770px;top:177px;font-size:12px;line-height:20px;font-weight:bold;letter-spacing:0.300px;">Print</div>
<div class="a" style="left:843px;top:177px;font-size:12px;line-height:20px;font-weight:bold;letter-spacing:0.040px;">Export</div>
<div class="a" style="left:209px;top:227px;font-size:10.3px;line-height:20px;font-weight:bold;letter-spacing:-0.100px;text-rendering:geometricPrecision;">Charges</div>
<div class="a" style="left:291px;top:227px;font-size:10.3px;line-height:20px;font-weight:bold;letter-spacing:0.333px;text-rendering:geometricPrecision;">Paid</div>
<div class="a" style="left:334px;top:227px;font-size:10.3px;line-height:20px;font-weight:bold;letter-spacing:0.067px;text-rendering:geometricPrecision;">Adjust.</div>
<div class="a" style="left:399px;top:227px;font-size:10.3px;line-height:20px;font-weight:bold;letter-spacing:-0.120px;text-rendering:geometricPrecision;">Credit</div>
<div class="a" style="left:465px;top:227px;font-size:10.3px;line-height:20px;font-weight:bold;letter-spacing:0.500px;text-rendering:geometricPrecision;">Fee</div>
<div class="a" style="left:504px;top:227px;font-size:10.3px;line-height:20px;font-weight:bold;letter-spacing:-0.120px;text-rendering:geometricPrecision;">Refund</div>
<div class="a" style="left:557px;top:227px;font-size:10.3px;line-height:20px;font-weight:bold;letter-spacing:-0.040px;text-rendering:geometricPrecision;">Recoup</div>
<div class="a" style="left:610px;top:227px;font-size:10.3px;line-height:20px;font-weight:bold;letter-spacing:-0.263px;text-rendering:geometricPrecision;">Write-Off</div>
<div class="a" style="left:668px;top:227px;font-size:10.3px;line-height:20px;font-weight:bold;letter-spacing:-0.057px;text-rendering:geometricPrecision;">Bad Debt</div>
<div class="a" style="left:748px;top:227px;font-size:10.3px;line-height:20px;font-weight:bold;letter-spacing:0.250px;text-rendering:geometricPrecision;">Balance</div>
<div class="a" style="left:284px;top:243px;font-size:10.3px;line-height:20px;font-weight:bold;letter-spacing:0.300px;text-rendering:geometricPrecision;">94.00</div>
<div class="a" style="left:757px;top:243px;font-size:10.3px;line-height:20px;font-weight:bold;letter-spacing:0.060px;text-rendering:geometricPrecision;">-94.00</div>
<div class="a r" style="left:284px;top:262px;font-size:10.3px;line-height:20px;letter-spacing:0.300px;text-rendering:geometricPrecision;">94.00</div>
<div class="a r" style="left:750px;top:262px;font-size:10.3px;line-height:20px;letter-spacing:0.200px;text-rendering:geometricPrecision;">-$94.00</div>
<div class="a" style="left:36px;top:281px;font-size:10.3px;line-height:20px;font-weight:bold;letter-spacing:0.008px;text-rendering:geometricPrecision;"><span style="background:linear-gradient(90deg,#e84010 0%,#e02030 14%,#a81890 30%,#3040e0 45%,#1a7a80 57%,#60a020 70%,#b08a20 85%,#d88a20 100%);-webkit-background-clip:text;background-clip:text;color:transparent">Potter, Harry</span></div>
<div class="a r" style="left:283px;top:282px;font-size:10.3px;line-height:20px;letter-spacing:0.550px;text-rendering:geometricPrecision;">50.00</div>
<div class="a r" style="left:750px;top:282px;font-size:10.3px;line-height:20px;letter-spacing:0.200px;text-rendering:geometricPrecision;">-$50.00</div>
<div class="a" style="left:56px;top:302px;font-size:10.3px;line-height:20px;font-weight:bold;letter-spacing:0.086px;text-rendering:geometricPrecision;">SRVC: 2/20/2025</div>
<div class="a" style="left:284px;top:302px;font-size:10.3px;line-height:20px;font-weight:bold;letter-spacing:0.300px;text-rendering:geometricPrecision;">50.00</div>
<div class="a" style="left:353px;top:302px;font-size:10.3px;line-height:20px;font-weight:bold;letter-spacing:0.200px;text-rendering:geometricPrecision;">0.00</div>
<div class="a" style="left:381px;top:301px;font-size:10.3px;line-height:20px;font-weight:bold;letter-spacing:-0.041px;text-rendering:geometricPrecision;">BAL REMAIN: $50.00</div>
<div class="a" style="left:491px;top:301px;font-size:10.3px;line-height:20px;font-weight:bold;letter-spacing:-0.078px;text-rendering:geometricPrecision;">PATIENT PRE-PAYMENT</div>
<div class="a r" style="left:55px;top:323px;font-size:10.3px;line-height:20px;letter-spacing:0.235px;text-rendering:geometricPrecision;">PMT/ADJ: 2/20/2025</div>
<div class="a r" style="left:283px;top:323px;font-size:10.3px;line-height:20px;letter-spacing:0.550px;text-rendering:geometricPrecision;">50.00</div>
<div class="a r" style="left:381px;top:322px;font-size:10.3px;line-height:20px;letter-spacing:0.309px;text-rendering:geometricPrecision;">PMT: PATIENT PRE-PAYMENT</div>
<div class="a" style="left:56px;top:363px;font-size:10.3px;line-height:20px;font-weight:bold;letter-spacing:0.086px;text-rendering:geometricPrecision;">SRVC: 2/20/2025</div>
<div class="a" style="left:284px;top:363px;font-size:10.3px;line-height:20px;font-weight:bold;letter-spacing:0.300px;text-rendering:geometricPrecision;">44.00</div>
<div class="a" style="left:353px;top:363px;font-size:10.3px;line-height:20px;font-weight:bold;letter-spacing:0.200px;text-rendering:geometricPrecision;">0.00</div>
<div class="a" style="left:381px;top:362px;font-size:10.3px;line-height:20px;font-weight:bold;letter-spacing:-0.041px;text-rendering:geometricPrecision;">BAL REMAIN: $44.00</div>
<div class="a" style="left:491px;top:362px;font-size:10.3px;line-height:20px;font-weight:bold;letter-spacing:-0.078px;text-rendering:geometricPrecision;">PATIENT PRE-PAYMENT</div>
<div class="a r" style="left:55px;top:384px;font-size:10.3px;line-height:20px;letter-spacing:0.235px;text-rendering:geometricPrecision;">PMT/ADJ: 2/20/2025</div>
<div class="a r" style="left:284px;top:384px;font-size:10.3px;line-height:20px;letter-spacing:0.300px;text-rendering:geometricPrecision;">44.00</div>
<div class="a r" style="left:381px;top:383px;font-size:10.3px;line-height:20px;letter-spacing:0.309px;text-rendering:geometricPrecision;">PMT: PATIENT PRE-PAYMENT</div>
<div class="a" style="left:38px;top:342px;font-size:10.3px;line-height:20px;font-weight:bold;letter-spacing:-0.045px;text-rendering:geometricPrecision;">Snake, Solid</div>
<div class="a r" style="left:284px;top:343px;font-size:10.3px;line-height:20px;letter-spacing:0.300px;text-rendering:geometricPrecision;">44.00</div>
<div class="a r" style="left:750px;top:343px;font-size:10.3px;line-height:20px;letter-spacing:0.200px;text-rendering:geometricPrecision;">-$44.00</div>
<div class="a" style="left:18px;top:402px;font-size:12px;line-height:20px;font-weight:bold;letter-spacing:-0.131px;">Akita Care Clinic</div>
<div class="a" style="left:214px;top:403px;font-size:10.3px;line-height:20px;font-weight:bold;letter-spacing:0.360px;text-rendering:geometricPrecision;">425.00</div>
<div class="a" style="left:284px;top:403px;font-size:10.3px;line-height:20px;font-weight:bold;letter-spacing:0.300px;text-rendering:geometricPrecision;">40.00</div>
<div class="a" style="left:351px;top:403px;font-size:10.3px;line-height:20px;font-weight:bold;letter-spacing:0.200px;text-rendering:geometricPrecision;">0.00</div>
<div class="a" style="left:410px;top:403px;font-size:10.3px;line-height:20px;font-weight:bold;letter-spacing:0.200px;text-rendering:geometricPrecision;">0.00</div>
<div class="a" style="left:465px;top:403px;font-size:10.3px;line-height:20px;font-weight:bold;letter-spacing:0.200px;text-rendering:geometricPrecision;">0.00</div>
<div class="a" style="left:520px;top:403px;font-size:10.3px;line-height:20px;font-weight:bold;letter-spacing:0.200px;text-rendering:geometricPrecision;">0.00</div>
<div class="a" style="left:576px;top:403px;font-size:10.3px;line-height:20px;font-weight:bold;letter-spacing:0.200px;text-rendering:geometricPrecision;">0.00</div>
<div class="a" style="left:634px;top:403px;font-size:10.3px;line-height:20px;font-weight:bold;letter-spacing:0.200px;text-rendering:geometricPrecision;">0.00</div>
<div class="a" style="left:694px;top:403px;font-size:10.3px;line-height:20px;font-weight:bold;letter-spacing:0.200px;text-rendering:geometricPrecision;">0.00</div>
<div class="a" style="left:753px;top:403px;font-size:10.3px;line-height:20px;font-weight:bold;letter-spacing:0.420px;text-rendering:geometricPrecision;">385.00</div>
<div class="a" style="left:18px;top:421px;font-size:12px;line-height:20px;font-weight:bold;letter-spacing:-0.177px;">Diane Anonuevo</div>
<div class="a r" style="left:220px;top:422px;font-size:10.3px;line-height:20px;letter-spacing:0.300px;text-rendering:geometricPrecision;">25.00</div>
<div class="a r" style="left:755px;top:422px;font-size:10.3px;line-height:20px;text-rendering:geometricPrecision;">$25.00</div>
<div class="a" style="left:2px;top:2px;width:2px;height:436px;background:linear-gradient(90deg,rgba(0,0,0,0.45),rgba(0,0,0,0))"></div><div class="a" style="left:895px;top:2px;width:6px;height:436px;background:linear-gradient(90deg,rgba(0,0,0,0),rgba(0,0,0,0.13))"></div><div class="a" style="left:848px;top:192px;width:32px;height:40px"><svg width="32" height="40" viewBox="0 0 32 40"><defs><filter id="sh" x="-30%" y="-30%" width="170%" height="170%"><feGaussianBlur stdDeviation="1.3"/></filter></defs><path d="M12.5 2.5 C14.2 2.5 15.5 3.6 15.5 5.5 L15.5 13 C16.4 12.1 18.4 12.2 18.9 13.6 C19.8 12.8 21.6 13.1 21.9 14.7 C22.8 14 25 14.6 25 16.5 L25 26 C25 32 22.5 37 17 37 C12.5 37 10.5 34.5 8 31.5 L2.6 25.3 C1.3 23.8 2.2 21.3 4.2 21.3 C5.5 21.3 7.2 22.5 9.5 24.5 L9.5 5.5 C9.5 3.6 10.8 2.5 12.5 2.5 Z" transform="translate(1.5,1.5)" fill="#000" opacity="0.4" filter="url(#sh)"/><path d="M12.5 2.5 C14.2 2.5 15.5 3.6 15.5 5.5 L15.5 13 C16.4 12.1 18.4 12.2 18.9 13.6 C19.8 12.8 21.6 13.1 21.9 14.7 C22.8 14 25 14.6 25 16.5 L25 26 C25 32 22.5 37 17 37 C12.5 37 10.5 34.5 8 31.5 L2.6 25.3 C1.3 23.8 2.2 21.3 4.2 21.3 C5.5 21.3 7.2 22.5 9.5 24.5 L9.5 5.5 C9.5 3.6 10.8 2.5 12.5 2.5 Z" fill="#fff" stroke="#000" stroke-width="2"/><path d="M15.5 13 L15.5 19 M18.9 13.6 L18.9 19 M21.9 14.7 L21.9 19" stroke="#000" stroke-width="1.2"/></svg></div>
</body></html>
